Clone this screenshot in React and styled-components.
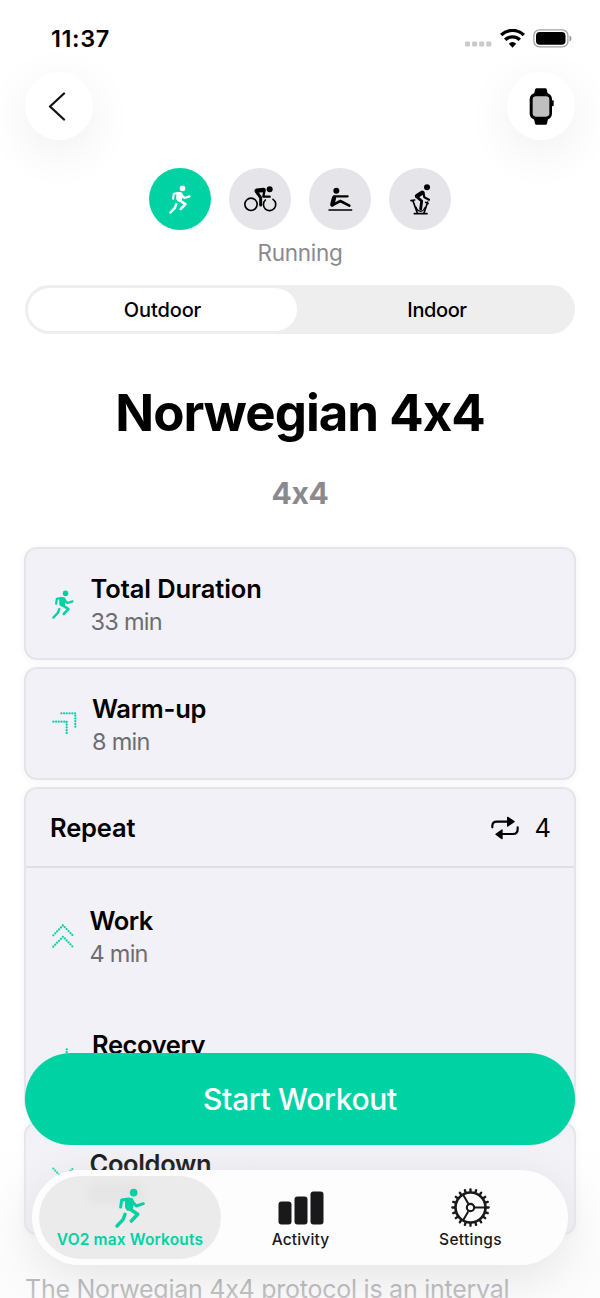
import { useState } from "react";
import styled, { createGlobalStyle } from "styled-components";

const GlobalStyle = createGlobalStyle`
  * {
    box-sizing: border-box;
  }
  body {
    margin: 0;
    background-color: white;
    font-family: Inter, "Liberation Sans", sans-serif;
    font-feature-settings: "calt" 0;
    color: black;
  }
  button {
    font-family: inherit;
    color: inherit;
    border: none;
    padding: 0;
    cursor: pointer;
  }
  svg {
    display: block;
    flex-shrink: 0;
  }
`;

const Screen = styled.div`
  position: relative;
  width: 600px;
  height: 1298px;
  overflow: hidden;
`;

const Label = styled.span`
  display: block;
  margin: ${(props) => props.$top || 0}px 0 0;
  white-space: nowrap;
  font-size: ${(props) => props.$size}px;
  line-height: ${(props) => props.$line}px;
  font-weight: ${(props) => props.$weight || 400};
  letter-spacing: ${(props) => props.$spacing || 0}px;
  color: ${(props) => props.$color || "inherit"};
`;

const StatusBar = styled.header`
  display: flex;
  justify-content: space-between;
  align-items: center;
  height: 72px;
  padding: 4px 28px 0 51px;
`;

const StatusIcons = styled.div`
  display: flex;
  align-items: center;
  gap: 8px;
`;

const NavBar = styled.nav`
  display: flex;
  justify-content: space-between;
  height: 68px;
  padding: 0 25px;
`;

const RoundButton = styled.button`
  display: flex;
  justify-content: center;
  align-items: center;
  width: 68px;
  height: 68px;
  padding-right: ${(props) => props.$shift || 0}px;
  border-radius: 50%;
  background-color: white;
  box-shadow: 0 12px 48px rgba(0, 0, 0, 0.07);
`;

const Sports = styled.div`
  display: flex;
  justify-content: center;
  gap: 18px;
  margin-top: 28px;
`;

const SportButton = styled.button`
  display: flex;
  justify-content: center;
  align-items: center;
  width: 62px;
  height: 62px;
  border-radius: 50%;
  background-color: ${(props) => (props.$active ? "#00d2a4" : "#e5e4e9")};
  color: ${(props) => (props.$active ? "white" : "black")};
`;

const Heading = styled.div`
  display: flex;
  flex-direction: column;
  align-items: center;
`;

const Segment = styled.div`
  display: flex;
  height: 49px;
  margin: 17px 25px 0;
  padding: 3px;
  border-radius: 25px;
  background-color: #eeeeee;
`;

const SegmentButton = styled.button`
  display: flex;
  justify-content: center;
  align-items: center;
  width: ${(props) => (props.$left ? 269 : 275)}px;
  padding-left: ${(props) => (props.$left ? 0 : 5)}px;
  border-radius: 22px;
  background-color: ${(props) => (props.$active ? "white" : "transparent")};
`;

const List = styled.main`
  display: flex;
  flex-direction: column;
  gap: 7px;
  margin: 33px 24px 0;
`;

const Card = styled.section`
  border: 2px solid #e5e4e9;
  border-radius: 13px;
  background-color: #f2f1f7;
  box-shadow: 0 1px 8px rgba(0, 0, 0, 0.05);
`;

const Row = styled.div`
  display: flex;
  align-items: center;
  height: 109px;
  padding: 1px 0 0 26px;
`;

const IconCell = styled.div`
  width: ${(props) => props.$width}px;
  color: #00d2a4;
`;

const RepeatCard = styled(Card)`
  height: 328px;
`;

const RepeatHeader = styled.div`
  display: flex;
  justify-content: space-between;
  align-items: center;
  height: 79px;
  padding: 0 23px 0 24px;
  border-bottom: 2px solid #e0dfe4;
`;

const RepeatCount = styled.div`
  display: flex;
  align-items: center;
  gap: 16px;
`;

const RepeatBody = styled.div`
  display: flex;
  flex-direction: column;
  gap: 15px;
  padding-top: 13px;
`;

const Description = styled.footer`
  padding: 37px 25px 0;
`;

const BottomFade = styled.div`
  position: absolute;
  inset: 1122px 0 0;
  background: linear-gradient(rgba(250, 250, 250, 0), rgba(250, 250, 250, 0.62));
`;

const StartButton = styled.button`
  position: absolute;
  left: 25px;
  top: 1053px;
  width: 550px;
  height: 92px;
  border-radius: 46px;
  background-color: #00d2a4;
  color: white;
  display: flex;
  justify-content: center;
  align-items: center;
`;

const TabBar = styled.nav`
  position: absolute;
  left: 32px;
  top: 1170px;
  width: 536px;
  height: 95px;
  display: flex;
  padding: 6px 7px;
  border-radius: 48px;
  background-color: #fdfdfe;
  box-shadow: 0 12px 50px rgba(0, 0, 0, 0.1);
`;

const Tab = styled.button`
  position: relative;
  display: flex;
  flex-direction: column;
  align-items: center;
  width: ${(props) => props.$width}px;
  height: 83px;
  padding-top: 11px;
  border-radius: 42px;
  background-color: ${(props) => (props.$active ? "#ebebec" : "transparent")};
  color: ${(props) => (props.$active ? "#00d2a4" : "#19191b")};
`;

const TabIcon = styled.div`
  position: relative;
  display: flex;
  align-items: center;
  height: 41px;
`;

const Smudge = styled.div`
  position: absolute;
  left: 50px;
  top: 6px;
  width: 54px;
  height: 22px;
  background-color: rgba(0, 0, 0, 0.022);
  filter: blur(5px);
`;

const RunIcon = ({ height }) => (
  <svg width={(height * 92) / 120} height={height} viewBox="0 0 92 120" fill="none" stroke="currentColor" strokeLinecap="round" strokeLinejoin="round">
    <circle cx="56" cy="14" r="11.500" fill="currentColor" stroke="none" />
    <path d="M34 34h16l4 7-5 22-11 1-4-6z" fill="currentColor" strokeWidth="8" />
    <path d="M17 57l3-21 22-3M50 39l14 15 21-7" strokeWidth="9" />
    <path d="M41 61l27 18-19 20" strokeWidth="11" />
    <path d="M30 79l-6 16-18 19" strokeWidth="10" />
  </svg>
);

const BikeIcon = () => (
  <svg width="33" height="26" viewBox="0 0 99 78" fill="none" stroke="currentColor" strokeLinecap="round" strokeLinejoin="round">
    <circle cx="21" cy="55" r="18.500" strokeWidth="5" />
    <path d="M64 42a18.500 18.500 0 1 0 23-2" strokeWidth="5" />
    <circle cx="77" cy="10" r="9" fill="currentColor" stroke="none" />
    <path d="M38 14l21-2" strokeWidth="13" />
    <path d="M37 17l13 18v22" strokeWidth="9" />
    <path d="M61 15l-3 17h19" strokeWidth="7" />
  </svg>
);

const RowingIcon = () => (
  <svg width="25" height="26" viewBox="0 0 75 78" fill="none" stroke="currentColor" strokeLinecap="round" strokeLinejoin="round">
    <circle cx="25" cy="14" r="9" fill="currentColor" stroke="none" />
    <path d="M18 36l-5 19" strokeWidth="13" />
    <path d="M18 31h41" strokeWidth="6.500" />
    <path d="M12 58l25-13 27 14" strokeWidth="8" />
    <path d="M3 72h68" strokeWidth="4.500" />
  </svg>
);

const SpinningIcon = () => (
  <svg width="21" height="32" viewBox="0 0 63 96" fill="none" stroke="currentColor" strokeLinecap="round" strokeLinejoin="round">
    <circle cx="51" cy="13" r="9" fill="currentColor" stroke="none" />
    <path d="M37 29L21 39" strokeWidth="13" />
    <path d="M20 41l15 13-3 24" strokeWidth="8.500" />
    <path d="M40 28l3 15 14 7" strokeWidth="6.500" />
    <path d="M3 53l11-2M9 54l13 36M53 57L42 90M54 62l-7-4" strokeWidth="5" />
    <path d="M18 72q3 12 14 13 9-1 13-12" strokeWidth="3.500" />
    <path d="M13 92h38" strokeWidth="5" />
  </svg>
);

const ChevronIcon = () => (
  <svg width="18" height="30" viewBox="0 0 18 30" fill="none" stroke="#111" strokeWidth="2.300" strokeLinecap="round" strokeLinejoin="round">
    <path d="M16 2.500L2 15.500l14 13" />
  </svg>
);

const WatchIcon = () => (
  <svg width="25" height="37" viewBox="0 0 75 111">
    <path d="M19 3q1-2 4-2h26q3 0 4 2l4 18H14zM14 88h44l-4 19q-1 3-4 3H22q-3 0-4-3z" fill="black" />
    <rect x="2" y="15" width="67" height="80" rx="18" fill="black" />
    <rect x="68" y="37" width="6" height="18" rx="3" fill="black" />
    <rect x="11" y="25" width="50" height="61" rx="10" fill="#bfbfbf" />
  </svg>
);

const SignalDots = () => (
  <svg width="27" height="18" viewBox="0 0 27 18" fill="#cacaca">
    {[0, 7.1, 14.2, 21.3].map((x) => (
      <rect key={x} x={x} y="12.500" width="5" height="5" rx="1.300" />
    ))}
  </svg>
);

const WifiIcon = () => (
  <svg width="25" height="19" viewBox="0 0 75 57" fill="none" stroke="black" strokeWidth="10">
    <path d="M3.500 18a49 49 0 0 1 68 0" />
    <path d="M15.500 32.500a32 32 0 0 1 44 0" />
    <path d="M37.500 56l-11-12a15 15 0 0 1 22 0z" fill="black" stroke="none" />
  </svg>
);

const BatteryIcon = () => (
  <svg width="39" height="19" viewBox="0 0 39 19">
    <rect x="0.900" y="0.900" width="34" height="17" rx="5.500" fill="none" stroke="#a3a3a3" strokeWidth="1.300" />
    <rect x="3" y="3" width="29.500" height="12.800" rx="3.800" fill="black" />
    <path d="M36.500 6.500q2 .6 2 3t-2 3z" fill="#999" />
  </svg>
);

const RepeatIcon = () => (
  <svg width="28" height="24" viewBox="0 0 84 72" fill="none" stroke="currentColor" strokeWidth="6.500" strokeLinecap="round">
    <path d="M4 34v-4q0-13 14-13h32M80 34v5q0 15-14 15H34" />
    <path d="M50 4l19 13-19 13zM33 42L15 55l18 13z" fill="currentColor" strokeWidth="4" strokeLinejoin="round" />
  </svg>
);

// direction of the dotted arrows hints at the effort of the step
const DOTTED = {
  rise: "M4 29h40v40M28 4h42v42",
  up: "M4 34L33 4l29 30M4 68l29-30 29 30",
  fall: "M44 4v40H4M70 28v42H28",
  down: "M4 5l29 30L62 5M4 39l29 30 29-30",
};

const DottedIcon = ({ name }) => (
  <svg width="25" height="25" viewBox="0 0 75 75" fill="none" stroke="currentColor" strokeWidth="6.800" strokeLinecap="round" strokeDasharray="0 8.200">
    <path d={DOTTED[name]} />
  </svg>
);

const BarsIcon = () => (
  <svg width="46" height="34" viewBox="0 0 46 34" fill="currentColor">
    <rect x="0.500" y="10.500" width="13" height="23" rx="3" />
    <rect x="16.500" y="5.500" width="13" height="28" rx="3" />
    <rect x="32.500" y="0.500" width="13" height="33" rx="3" />
  </svg>
);

const GearIcon = () => (
  <svg width="39" height="39" viewBox="-58.500 -58.500 117 117" fill="none" stroke="currentColor">
    {[...Array(20)].map((_, i) => (
      <path key={i} d="M47 0h7.500" strokeWidth="7" strokeLinecap="round" transform={`rotate(${i * 18})`} />
    ))}
    <circle r="45" strokeWidth="8" />
    <circle r="11" strokeWidth="6.500" />
    <path d="M13 0h31M-6.500 -11.500l-15.500 -27M-6.500 11.500l-15.500 27" strokeWidth="6" />
  </svg>
);

const SPORTS = [
  { name: "Running", icon: <RunIcon height={29} /> },
  { name: "Cycling", icon: <BikeIcon /> },
  { name: "Rowing", icon: <RowingIcon /> },
  { name: "Indoor Cycling", icon: <SpinningIcon /> },
];

const Step = ({ icon, width, title, time, spacing }) => (
  <Row>
    <IconCell $width={width}>{icon}</IconCell>
    <div>
      <Label $size={25.500} $line={33} $top={2} $weight={600} $spacing={spacing}>{title}</Label>
      <Label $size={23.500} $line={33} $color="#6d6d71" $spacing={-0.75}>{time || "\u00a0"}</Label>
    </div>
  </Row>
);

export default function App() {
  const [sport, setSport] = useState("Running");
  const [place, setPlace] = useState("Outdoor");
  return (
    <>
      <GlobalStyle />
      <Screen>
        <StatusBar>
          <Label $size={23.500} $line={28} $top={1} $weight={600} $spacing={0.6}>11:37</Label>
          <StatusIcons>
            <SignalDots />
            <WifiIcon />
            <BatteryIcon />
          </StatusIcons>
        </StatusBar>
        <NavBar>
          <RoundButton aria-label="Back" $shift={5}><ChevronIcon /></RoundButton>
          <RoundButton aria-label="Watch"><WatchIcon /></RoundButton>
        </NavBar>
        <Sports>
          {SPORTS.map(({ name, icon }) => (
            <SportButton key={name} aria-label={name} $active={name === sport} onClick={() => setSport(name)}>
              {icon}
            </SportButton>
          ))}
        </Sports>
        <Heading>
          <Label as="p" $top={8} $size={22.500} $line={30} $color="#8a8a8e" $spacing={-0.3}>{sport}</Label>
        </Heading>
        <Segment>
          {["Outdoor", "Indoor"].map((name) => (
            <SegmentButton key={name} $left={name === "Outdoor"} $active={name === place} onClick={() => setPlace(name)}>
              <Label $size={20} $line={26} $weight={name === place ? 500 : 450} $spacing={name === place ? -0.1 : -0.4}>{name}</Label>
            </SegmentButton>
          ))}
        </Segment>
        <Heading>
          <Label as="h1" $top={47} $size={51} $line={64} $weight={700} $spacing={-1}>Norwegian 4x4</Label>
          <Label as="h2" $top={27} $size={30} $line={42} $weight={700} $color="#8a8a8e" $spacing={-0.4}>4x4</Label>
        </Heading>
        <List>
          <Card>
            <Step icon={<RunIcon height={29} />} width={38.5} title="Total Duration" time="33 min" spacing={-0.1} />
          </Card>
          <Card>
            <Step icon={<DottedIcon name="rise" />} width={40} title="Warm-up" time="8 min" spacing={-0.25} />
          </Card>
          <RepeatCard>
            <RepeatHeader>
              <Label $size={25.500} $line={33} $weight={600} $spacing={-0.15}>Repeat</Label>
              <RepeatCount>
                <RepeatIcon />
                <Label $size={25.500} $line={33}>4</Label>
              </RepeatCount>
            </RepeatHeader>
            <RepeatBody>
              <Step icon={<DottedIcon name="up" />} width={37.5} title="Work" time="4 min" spacing={-0.5} />
              <Step icon={<DottedIcon name="fall" />} width={40} title="Recovery" spacing={-0.4} />
            </RepeatBody>
          </RepeatCard>
          <Card>
            <Step icon={<DottedIcon name="down" />} width={37.5} title="Cooldown" spacing={-0.35} />
          </Card>
        </List>
        <Description>
          <Label $size={25} $line={34} $color="#6d6d71" $spacing={-0.25}>The Norwegian 4x4 protocol is an interval</Label>
        </Description>
        <BottomFade />
        <StartButton>
          <Label $size={30} $line={38} $weight={550} $spacing={-0.35}>Start Workout</Label>
        </StartButton>
        <TabBar>
          <Tab $width={182} $active>
            <Smudge />
            <TabIcon><RunIcon height={40} /></TabIcon>
            <Label $size={15.500} $line={24} $weight={600} $spacing={0.15}>VO2 max Workouts</Label>
          </Tab>
          <Tab $width={159}>
            <TabIcon><BarsIcon /></TabIcon>
            <Label $size={15.500} $line={24} $weight={500} $spacing={0.15}>Activity</Label>
          </Tab>
          <Tab $width={181}>
            <TabIcon><GearIcon /></TabIcon>
            <Label $size={15.500} $line={24} $weight={500} $spacing={0.3}>Settings</Label>
          </Tab>
        </TabBar>
      </Screen>
    </>
  );
}
